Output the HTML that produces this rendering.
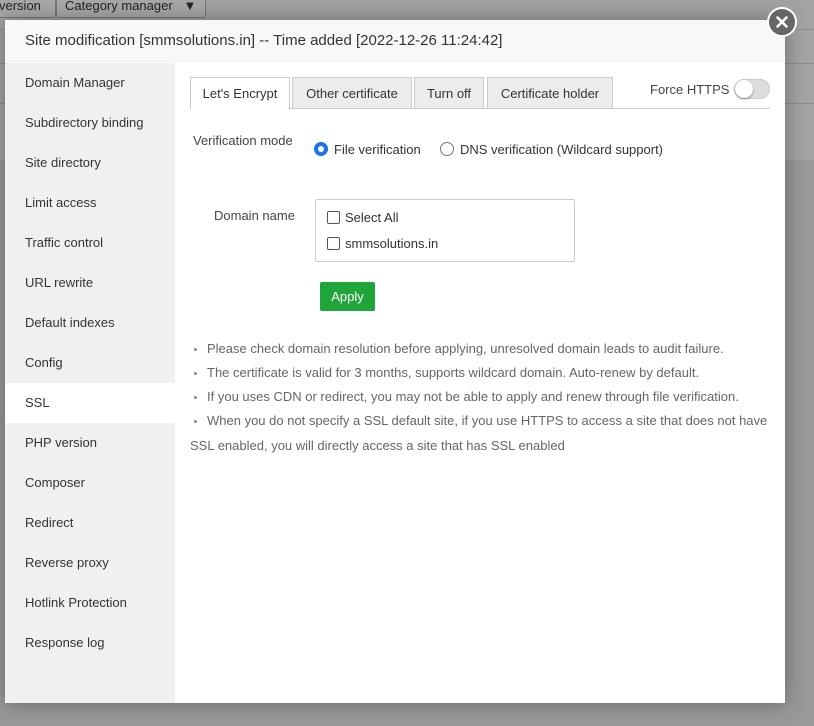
<!DOCTYPE html>
<html><head><meta charset="utf-8"><style>
*{box-sizing:border-box;margin:0;padding:0}
body{width:814px;height:726px;overflow:hidden;background:#999;font-family:"Liberation Sans",sans-serif;position:relative;color:#333}
.bgtop{position:absolute;left:0;top:0;width:814px;height:160px;background:#a3a3a3}
.bgbtn{position:absolute;top:-8px;height:26px;border:1px solid #777;border-radius:3px;background:#a8a8a8;font-size:13px;color:#222;padding:5px 8px}
.line{position:absolute;left:0;width:814px;height:1px;background:#8d8d8d}
.dlg{position:absolute;left:5px;top:20px;width:780px;height:683px;background:#fff;box-shadow:0 0 20px rgba(0,0,0,.35)}
.hd{height:42px;background:#f8f8f8;border-bottom:1px solid #eee;font-size:15px;line-height:42px;padding-left:20px;color:#333}
.side{position:absolute;left:0;top:43px;width:170px;bottom:0;background:#f0f0f0}
.side div{height:40px;line-height:40px;padding-left:20px;font-size:13px;color:#333}
.side .on{background:#fff}
.close{position:absolute;left:767px;top:7px;width:30px;height:30px;border-radius:50%;background:#666;border:2px solid #fff}
.main{position:absolute;left:170px;top:43px;right:0;bottom:0}
.tabs{position:absolute;left:15px;top:14px;width:580px;height:32px;border-bottom:1px solid #ccc8dc}
.tab{position:absolute;top:0;height:32px;border:1px solid #ccc;background:#ececec;font-size:13px;line-height:32px;text-align:center;color:#333}
.tab.on{background:#fff;border-bottom-color:#fff;height:33px}
.lbl{position:absolute;font-size:13px;color:#444}
.rad{position:absolute;width:14px;height:14px;border-radius:50%;border:1px solid #777}
.cb{position:absolute;width:13px;height:13px;border:1px solid #555;border-radius:2px}
ul{position:absolute;left:15px;top:274px;font-size:13px;color:#666;list-style:none;white-space:nowrap}
ul li{line-height:24px;position:relative;padding-left:17px}
ul li:before{content:"";position:absolute;left:4px;top:11px;width:3px;height:3px;border-radius:50%;background:#888}
</style></head><body>
<div class="bgtop"></div>
<div class="bgbtn" style="left:-10px;width:66px">version</div>
<div class="bgbtn" style="left:56px;width:150px">Category manager &nbsp;&nbsp;▼</div>
<div class="line" style="top:29px"></div>
<div class="line" style="top:63px"></div>
<div class="line" style="top:103px"></div>
<div class="dlg">
 <div class="hd">Site modification [smmsolutions.in] -- Time added [2022-12-26 11:24:42]</div>
 <div class="side">
  <div>Domain Manager</div><div>Subdirectory binding</div><div>Site directory</div><div>Limit access</div><div>Traffic control</div><div>URL rewrite</div><div>Default indexes</div><div>Config</div><div class="on">SSL</div><div>PHP version</div><div>Composer</div><div>Redirect</div><div>Reverse proxy</div><div>Hotlink Protection</div><div>Response log</div>
 </div>
 <div class="main">
  <div class="tabs">
   <div class="tab on" style="left:0;width:100px">Let's Encrypt</div>
   <div class="tab" style="left:102px;width:120px">Other certificate</div>
   <div class="tab" style="left:224px;width:70px">Turn off</div>
   <div class="tab" style="left:297px;width:126px">Certificate holder</div>
  </div>
  <div class="lbl" style="left:475px;top:19px">Force HTTPS</div>
  <div style="position:absolute;left:559px;top:16px;width:36px;height:20px;border-radius:10px;background:#ddd;border:1px solid #ccc"><div style="position:absolute;left:0;top:0;width:18px;height:18px;border-radius:50%;background:#fff;box-shadow:0 1px 2px rgba(0,0,0,.4)"></div></div>
  <div class="lbl" style="left:18px;top:70px">Verification mode</div>
  <div class="rad" style="left:139px;top:79px;border:4px solid #1a73e8;background:#fff"></div>
  <div class="lbl" style="left:159px;top:79px;color:#333">File verification</div>
  <div class="rad" style="left:265px;top:79px"></div>
  <div class="lbl" style="left:285px;top:79px;color:#333">DNS verification (Wildcard support)</div>
  <div class="lbl" style="left:39px;top:145px">Domain name</div>
  <div style="position:absolute;left:140px;top:136px;width:260px;height:63px;border:1px solid #ccc;border-radius:2px"></div>
  <div class="cb" style="left:152px;top:148px"></div><div class="lbl" style="left:170px;top:147px;color:#333">Select All</div>
  <div class="cb" style="left:152px;top:174px"></div><div class="lbl" style="left:170px;top:173px;color:#333">smmsolutions.in</div>
  <div style="position:absolute;left:145px;top:219px;width:55px;height:29px;background:#20a53a;border-radius:2px;color:#fff;font-size:13px;line-height:29px;text-align:center">Apply</div>
  <ul>
   <li>Please check domain resolution before applying, unresolved domain leads to audit failure.</li>
   <li>The certificate is valid for 3 months, supports wildcard domain. Auto-renew by default.</li>
   <li>If you uses CDN or redirect, you may not be able to apply and renew through file verification.</li>
   <li>When you do not specify a SSL default site, if you use HTTPS to access a site that does not have</li>
  </ul>
  <div style="position:absolute;left:15px;top:375px;font-size:13px;color:#666">SSL enabled, you will directly access a site that has SSL enabled</div>
 </div>
</div>
<div class="close"><svg width="26" height="26" viewBox="0 0 26 26" style="position:absolute;left:0;top:0"><path d="M8.5 8.5L17.5 17.5M17.5 8.5L8.5 17.5" stroke="#fff" stroke-width="2.5" stroke-linecap="round"/></svg></div>
</body></html>
